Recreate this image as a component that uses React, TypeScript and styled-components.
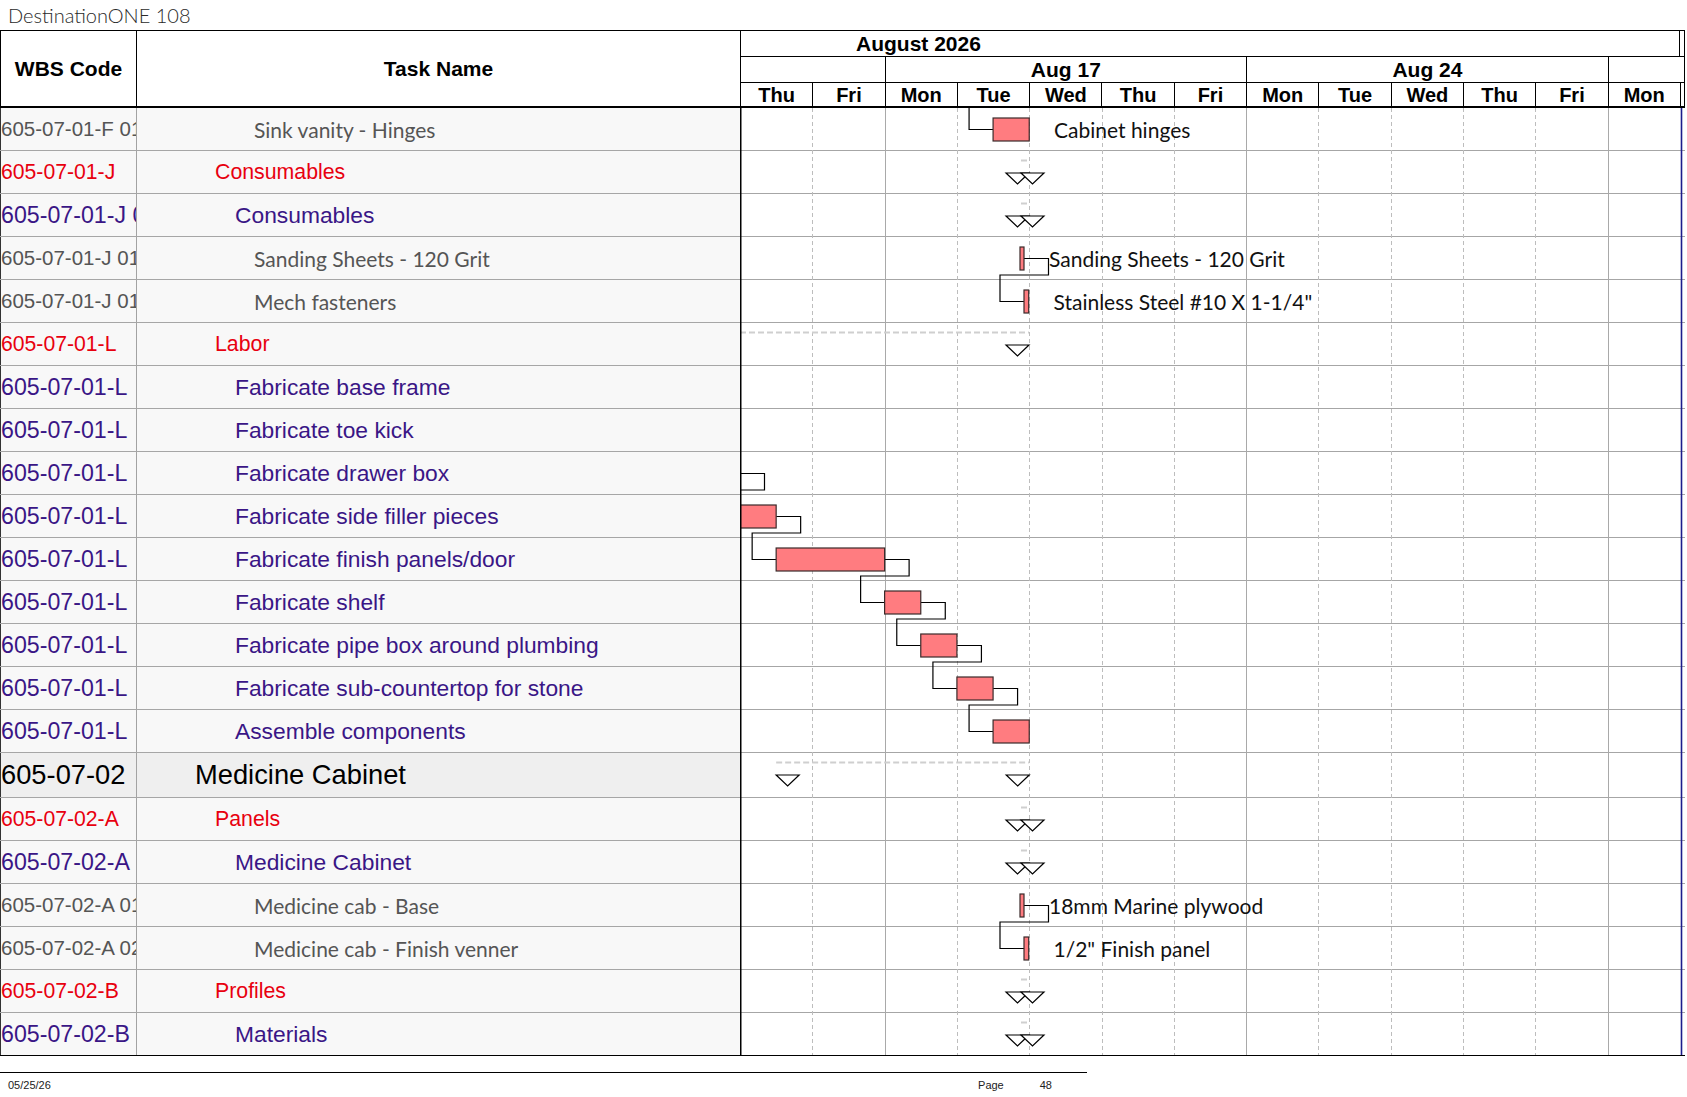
import React from "react";
import styled, { createGlobalStyle } from "styled-components";

const ARIAL = '"Liberation Sans", Arial, sans-serif';
const HUMANIST = 'Lato, "Open Sans", sans-serif';

const DAY = 940 / 13;
const CHART_W = 945;
const MID = 21.5;

type Level = 0 | 1 | 2 | 3;

interface Task {
  wbs: string;
  name: string;
  level: Level;
}

const tasks: Task[] = [
  { wbs: "605-07-01-F 01", name: "Sink vanity - Hinges", level: 3 },
  { wbs: "605-07-01-J", name: "Consumables", level: 1 },
  { wbs: "605-07-01-J 01", name: "Consumables", level: 2 },
  { wbs: "605-07-01-J 0101", name: "Sanding Sheets - 120 Grit", level: 3 },
  { wbs: "605-07-01-J 0102", name: "Mech fasteners", level: 3 },
  { wbs: "605-07-01-L", name: "Labor", level: 1 },
  { wbs: "605-07-01-L", name: "Fabricate base frame", level: 2 },
  { wbs: "605-07-01-L", name: "Fabricate toe kick", level: 2 },
  { wbs: "605-07-01-L", name: "Fabricate drawer box", level: 2 },
  { wbs: "605-07-01-L", name: "Fabricate side filler pieces", level: 2 },
  { wbs: "605-07-01-L", name: "Fabricate finish panels/door", level: 2 },
  { wbs: "605-07-01-L", name: "Fabricate shelf", level: 2 },
  { wbs: "605-07-01-L", name: "Fabricate pipe box around plumbing", level: 2 },
  { wbs: "605-07-01-L", name: "Fabricate sub-countertop for stone", level: 2 },
  { wbs: "605-07-01-L", name: "Assemble components", level: 2 },
  { wbs: "605-07-02", name: "Medicine Cabinet", level: 0 },
  { wbs: "605-07-02-A", name: "Panels", level: 1 },
  { wbs: "605-07-02-A", name: "Medicine Cabinet", level: 2 },
  { wbs: "605-07-02-A 01", name: "Medicine cab - Base", level: 3 },
  { wbs: "605-07-02-A 02", name: "Medicine cab - Finish venner", level: 3 },
  { wbs: "605-07-02-B", name: "Profiles", level: 1 },
  { wbs: "605-07-02-B", name: "Materials", level: 2 },
];

const rowHeight = (t: Task) => (t.level === 0 ? 45 : 43);
const rowTops: number[] = [];
let acc = 0;
tasks.forEach((t) => {
  rowTops.push(acc);
  acc += rowHeight(t);
});
const BODY_H = acc;

const days = ["Thu", "Fri", "Mon", "Tue", "Wed", "Thu", "Fri", "Mon", "Tue", "Wed", "Thu", "Fri", "Mon"];
const weeks = [
  { label: "", span: 2 },
  { label: "Aug 17", span: 5 },
  { label: "Aug 24", span: 5 },
];

// bars in px from the left edge of the chart
const bars = [
  { row: 0, from: 3.5 * DAY, to: 4 * DAY },
  { row: 3, from: 280, to: 284 },
  { row: 4, from: 284, to: 288.7 },
  { row: 9, from: -20, to: 0.5 * DAY },
  { row: 10, from: 0.5 * DAY, to: 2 * DAY },
  { row: 11, from: 2 * DAY, to: 2.5 * DAY },
  { row: 12, from: 2.5 * DAY, to: 3 * DAY },
  { row: 13, from: 3 * DAY, to: 3.5 * DAY },
  { row: 14, from: 3.5 * DAY, to: 4 * DAY },
  { row: 18, from: 280, to: 284 },
  { row: 19, from: 284, to: 288.7 },
];

const links = [
  { a: 3, endA: 284, b: 4, startB: 284 },
  { a: 8, endA: 0, b: 9, startB: 0 },
  { a: 9, endA: 0.5 * DAY, b: 10, startB: 0.5 * DAY },
  { a: 10, endA: 2 * DAY, b: 11, startB: 2 * DAY },
  { a: 11, endA: 2.5 * DAY, b: 12, startB: 2.5 * DAY },
  { a: 12, endA: 3 * DAY, b: 13, startB: 3 * DAY },
  { a: 13, endA: 3.5 * DAY, b: 14, startB: 3.5 * DAY },
  { a: 18, endA: 284, b: 19, startB: 284 },
];

const summaries = [
  { row: 1, from: 281, to: 289 },
  { row: 2, from: 281, to: 289 },
  { row: 5, from: -40, to: 289 },
  { row: 15, from: 0.5 * DAY, to: 4 * DAY },
  { row: 16, from: 281, to: 289 },
  { row: 17, from: 281, to: 289 },
  { row: 20, from: 281, to: 289 },
  { row: 21, from: 281, to: 289 },
];

const labels = [
  { row: 0, x: 314, text: "Cabinet hinges" },
  { row: 3, x: 309, text: "Sanding Sheets - 120 Grit" },
  { row: 4, x: 313.5, text: 'Stainless Steel #10 X 1-1/4"' },
  { row: 18, x: 309, text: "18mm Marine plywood" },
  { row: 19, x: 313.5, text: '1/2" Finish panel' },
];

const linkPath = (a: number, endA: number, b: number, startB: number) => {
  const y1 = rowTops[a] + MID;
  const y2 = rowTops[b] - 5;
  const y3 = rowTops[b] + MID;
  return `M${endA} ${y1}H${endA + 24.5}V${y2}H${startB - 24}V${y3}H${startB}`;
};

const levelColor: Record<Level, string> = {
  0: "#000",
  1: "#e8000f",
  2: "#3a1686",
  3: "#555",
};
const nameSize: Record<Level, number> = { 0: 27.3, 1: 21.3, 2: 22.8, 3: 21 };
const wbsSize: Record<Level, number> = { 0: 27.3, 1: 21.2, 2: 23.2, 3: 20.5 };
const indent: Record<Level, number> = { 0: 58, 1: 78, 2: 98, 3: 117 };

const GlobalStyle = createGlobalStyle`
  * { box-sizing: border-box; }
  body {
    margin: 0;
    background: #fff;
    font-family: ${ARIAL};
    overflow: hidden;
  }
`;

const Page = styled.div`
  width: 1687px;
  height: 1097px;
  background: #fff;
`;

const Title = styled.div`
  height: 30px;
  padding-left: 8px;
  line-height: 30px;
  font-family: ${HUMANIST};
  font-weight: 300;
  font-size: 20px;
  color: #2a2a2a;
`;

const Sheet = styled.div`
  width: 1685px;
  border-top: 1px solid #000;
`;

const HeadRow = styled.div`
  display: flex;
  height: 77px;
  border-bottom: 2px solid #000;
`;

const HeadCell = styled.div<{ $w: number; $first?: boolean }>`
  width: ${(p) => p.$w}px;
  display: flex;
  align-items: center;
  justify-content: center;
  font-weight: 700;
  font-size: 21px;
  color: #000;
  border-left: ${(p) => (p.$first ? "1px solid #000" : "0")};
  border-right: ${(p) => (p.$first ? "1px solid #000" : "0")};
`;

const ChartHead = styled.div`
  width: ${CHART_W}px;
  display: flex;
  flex-direction: column;
  border-right: 1px solid #000;
`;

const Band = styled.div<{ $h: number; $line?: boolean }>`
  display: flex;
  height: ${(p) => p.$h}px;
  border-bottom: ${(p) => (p.$line ? "1px solid #000" : "0")};
`;

const MonthCell = styled.div`
  width: ${13 * DAY}px;
  border-left: 1px solid #000;
  border-right: 1px solid #000;
  padding-left: 115px;
  font-weight: 700;
  font-size: 21px;
  line-height: 25px;
`;

const BandCell = styled.div<{ $w?: number; $size: number }>`
  ${(p) => (p.$w ? `width: ${p.$w}px;` : "flex: 1;")}
  flex-shrink: 0;
  border-left: 1px solid #000;
  display: flex;
  align-items: center;
  justify-content: center;
  font-weight: 700;
  font-size: ${(p) => p.$size}px;
  line-height: 1;
  overflow: hidden;
`;

const Body = styled.div`
  display: flex;
`;

const Table = styled.div`
  width: 740px;
  display: flex;
  flex-direction: column;
`;

const TableRow = styled.div<{ $level: Level; $last: boolean }>`
  display: grid;
  grid-template-columns: 137px 603px;
  height: ${(p) => (p.$level === 0 ? 45 : 43)}px;
  border-bottom: 1px solid ${(p) => (p.$last ? "#000" : "#a6a6a6")};
  background: ${(p) => (p.$level === 0 ? "#efefef" : "#f8f8f8")};
`;

const WbsCell = styled.div<{ $level: Level }>`
  display: flex;
  align-items: center;
  border-left: 1px solid #333;
  border-right: 1px solid #a3a3a3;
  overflow: hidden;
  white-space: nowrap;
  font-family: ${ARIAL};
  font-size: ${(p) => wbsSize[p.$level]}px;
  color: ${(p) => levelColor[p.$level]};
`;

const NameCell = styled.div<{ $level: Level }>`
  display: flex;
  align-items: center;
  padding-left: ${(p) => indent[p.$level]}px;
  white-space: nowrap;
  overflow: hidden;
  font-family: ${(p) => (p.$level === 3 ? HUMANIST : ARIAL)};
  font-size: ${(p) => nameSize[p.$level]}px;
  color: ${(p) => levelColor[p.$level]};
`;

const ChartBody = styled.div`
  position: relative;
  width: ${CHART_W}px;
  height: ${BODY_H}px;
  background: #fff;
`;

const ChartRow = styled.div<{ $h: number; $last: boolean }>`
  height: ${(p) => p.$h}px;
  border-bottom: 1px solid ${(p) => (p.$last ? "#000" : "#a6a6a6")};
`;

const Canvas = styled.svg`
  position: absolute;
  left: 0;
  top: 0;
  overflow: hidden;
`;

const BarLabel = styled.span`
  position: absolute;
  font-family: ${HUMANIST};
  font-size: 21px;
  line-height: 24px;
  color: #111;
  white-space: nowrap;
`;

const Footer = styled.div`
  width: 1087px;
  margin-top: 16px;
  border-top: 1px solid #000;
  display: flex;
  align-items: center;
  padding: 6px 35px 0 8px;
  font-family: ${ARIAL};
  font-size: 11px;
  color: #222;
`;

const FooterRight = styled.div`
  margin-left: auto;
  display: flex;
  gap: 36px;
`;

const Gantt: React.FC = () => (
  <Canvas width={CHART_W} height={BODY_H} viewBox={`0 0 ${CHART_W} ${BODY_H}`}>
    {days.map((d, i) => {
      if (i === 0) return null;
      const x = Math.round(i * DAY) + 0.5;
      const solid = d === "Mon";
      return (
        <line
          key={`g${i}`}
          x1={x}
          x2={x}
          y1={0}
          y2={BODY_H - 1}
          stroke={solid ? "#a9a9a9" : "#bdbdbd"}
          strokeWidth={1}
          strokeDasharray={solid ? undefined : "4 3"}
          shapeRendering="crispEdges"
        />
      );
    })}

    {summaries.map((s) => {
      const top = rowTops[s.row];
      const ty = top + 22;
      return (
        <g key={`s${s.row}`}>
          <line
            x1={Math.max(s.from, 0)}
            x2={s.to}
            y1={top + 9.5}
            y2={top + 9.5}
            stroke="#cfcfcf"
            strokeWidth={2}
            strokeDasharray="6 3"
          />
          <polygon
            points={`${s.to - 23},${ty} ${s.to},${ty} ${s.to - 11.5},${ty + 11}`}
            fill="#fff"
            stroke="#000"
            strokeWidth={1.2}
          />
          {s.from >= 0 && (
            <polygon
              points={`${s.from},${ty} ${s.from + 23},${ty} ${s.from + 11.5},${ty + 11}`}
              fill="#fff"
              stroke="#000"
              strokeWidth={1.2}
            />
          )}
        </g>
      );
    })}

    <path
      d={`M${3.5 * DAY - 24} 0V${MID}H${3.5 * DAY}`}
      fill="none"
      stroke="#000"
      strokeWidth={1.2}
    />
    {links.map((l, i) => (
      <path key={`l${i}`} d={linkPath(l.a, l.endA, l.b, l.startB)} fill="none" stroke="#000" strokeWidth={1.2} />
    ))}

    {bars.map((b, i) => (
      <rect
        key={`b${i}`}
        x={b.from}
        y={rowTops[b.row] + 10}
        width={b.to - b.from}
        height={23}
        fill="#ff7c80"
        stroke="#3a2a2a"
        strokeWidth={1.2}
      />
    ))}

    <line x1={0.75} x2={0.75} y1={0} y2={BODY_H} stroke="#000" strokeWidth={1.5} />
    <line x1={941.5} x2={941.5} y1={0} y2={BODY_H - 1} stroke="#1c1c8c" strokeWidth={1.6} />
  </Canvas>
);

const App: React.FC = () => (
  <Page>
    <GlobalStyle />
    <Title>DestinationONE 108</Title>
    <Sheet>
      <HeadRow>
        <HeadCell $w={137} $first>
          WBS Code
        </HeadCell>
        <HeadCell $w={603}>Task Name</HeadCell>
        <ChartHead>
          <Band $h={26} $line>
            <MonthCell>August 2026</MonthCell>
          </Band>
          <Band $h={26} $line>
            {weeks.map((w, i) => (
              <BandCell key={i} $w={w.span * DAY} $size={21}>
                {w.label}
              </BandCell>
            ))}
            <BandCell $size={21} />
          </Band>
          <Band $h={23}>
            {days.map((d, i) => (
              <BandCell key={i} $w={DAY} $size={20}>
                {d}
              </BandCell>
            ))}
            <BandCell $size={20} />
          </Band>
        </ChartHead>
      </HeadRow>

      <Body>
        <Table>
          {tasks.map((t, i) => (
            <TableRow key={i} $level={t.level} $last={i === tasks.length - 1}>
              <WbsCell $level={t.level}>{t.wbs}</WbsCell>
              <NameCell $level={t.level}>{t.name}</NameCell>
            </TableRow>
          ))}
        </Table>
        <ChartBody>
          {tasks.map((t, i) => (
            <ChartRow key={i} $h={rowHeight(t)} $last={i === tasks.length - 1} />
          ))}
          <Gantt />
          {labels.map((l) => (
            <BarLabel key={l.row} style={{ left: l.x, top: rowTops[l.row] + 10 }}>
              {l.text}
            </BarLabel>
          ))}
        </ChartBody>
      </Body>
    </Sheet>
    <Footer>
      <span>05/25/26</span>
      <FooterRight>
        <span>Page</span>
        <span>48</span>
      </FooterRight>
    </Footer>
  </Page>
);

export default App;
